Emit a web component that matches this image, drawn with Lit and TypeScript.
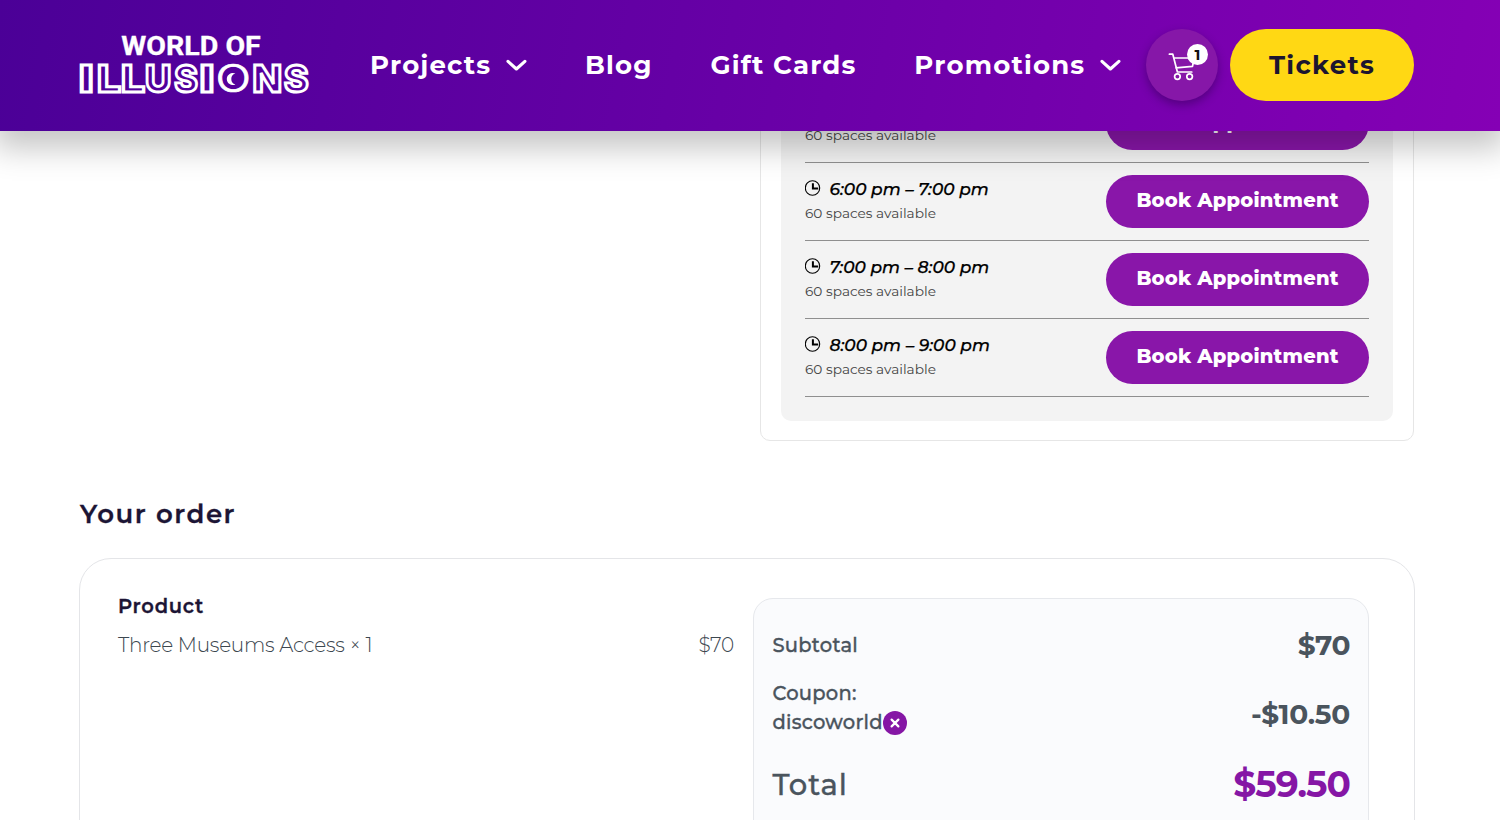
import { LitElement, html, css } from 'lit';
import { customElement, property } from 'lit/decorators.js';

const chevron = html`<svg class="chevron" width="21" height="13" viewBox="0 0 21 13" fill="none" stroke="#fff" stroke-width="3.1" stroke-linecap="round" stroke-linejoin="round"><path d="M2 2.4l8.4 7.6L18.9 2.4"/></svg>`;

/* letter, left edge, advance width */
const LOGO_LETTERS: [string, number, number][] = [
  ['I', 78.8, 14.9], ['L', 97, 24], ['L', 121, 24], ['U', 145, 26.3], ['S', 174.2, 23.5],
  ['I', 199.4, 14.9], ['O', 215.6, 35.5], ['N', 252.6, 29.5], ['S', 284, 24.5],
];

@customElement('site-header')
export class SiteHeader extends LitElement {
  static styles = css`
    :host { display: block; position: relative; z-index: 2; }
    header {
      display: flex; align-items: center; height: 131px; box-sizing: border-box;
      padding: 0 86px 1px 79px;
      background: linear-gradient(100deg, #4b0097 0%, #6500a5 45%, #8500b5 100%);
      box-shadow: 0 11px 30px 6px rgba(0, 0, 0, 0.23);
      color: #fff;
    }
    .logo { display: block; flex: none; margin-right: 61px; overflow: visible; }
    .world { font: 700 26px Roboto, sans-serif; fill: #fff; stroke: #fff; stroke-width: 0.3; }
    .maze { font: 800 37.5px Inter, sans-serif; fill: none; stroke: #fff; stroke-width: 2.9; stroke-linejoin: miter; }
    .ring { font-weight: 300; fill: #fff; stroke-width: 0.7; }
    nav { display: flex; align-items: center; gap: 57.7px; font-size: 26px; font-weight: 700; letter-spacing: 1.2px; line-height: 40px; white-space: nowrap; }
    .item { display: flex; align-items: center; gap: 15px; }
    .cart {
      position: relative; flex: none; display: flex; margin-left: auto;
      width: 72px; height: 72px; border-radius: 50%;
      background: #8617a8; box-shadow: 0 4px 10px rgba(40, 0, 70, 0.45);
    }
    .badge {
      position: absolute; left: 41px; top: 15px; width: 21px; height: 21px; border-radius: 50%;
      background: #fff; color: #111; font-size: 15px; font-weight: 700; line-height: 22px; text-align: center;
    }
    .tickets {
      flex: none; margin-left: 12px; width: 184px; height: 72px; border-radius: 36px; background: #ffd814; color: #1c1530;
      font-size: 26px; font-weight: 700; letter-spacing: 1.3px; line-height: 72px; text-align: center;
    }
  `;
  render() {
    return html`<header>
      <svg class="logo" width="230" height="64" viewBox="79 34 230 64">
        <text class="world" x="121.3" y="56.2" textLength="139.5" lengthAdjust="spacingAndGlyphs">WORLD OF</text>
        ${LOGO_LETTERS.map(([c, x, w]) => html`<svg x=${x} y="60" width=${w} height="38" overflow="visible"><text class="maze ${c === 'O' ? 'ring' : ''}" x="0" y="32.9" textLength=${w} lengthAdjust="spacingAndGlyphs">${c}</text></svg>`)}
        <path d="M235.4 74.6a6 6 0 1 0 0 10.8a5.6 5.6 0 0 1 0-10.8z" fill="#fff"/>
      </svg>
      <nav>
        <span class="item">Projects${chevron}</span>
        <span class="item">Blog</span>
        <span class="item">Gift Cards</span>
        <span class="item">Promotions${chevron}</span>
      </nav>
      <div class="cart">
        <svg width="72" height="72" viewBox="1146 29 72 72" fill="none" stroke="#fff" stroke-width="1.7" stroke-linecap="round" stroke-linejoin="round">
          <path d="M1169.4 54.2h3.4l4.6 17.8h14.4M1173.9 58h20.4l-1.8 8.3-16.6 1.5"/>
          <circle cx="1177.4" cy="76.6" r="2.8"/><circle cx="1189.6" cy="76.6" r="2.8"/>
        </svg>
        <span class="badge">1</span>
      </div>
      <div class="tickets">Tickets</div>
    </header>`;
  }
}

@customElement('time-slot')
export class TimeSlot extends LitElement {
  @property() time = '';
  static styles = css`
    :host { display: flex; justify-content: space-between; align-items: center; height: 78px; box-sizing: border-box; border-bottom: 1px solid #8f8f8f; }
    .info { padding-bottom: 2px; }
    .time { display: flex; align-items: center; gap: 8.5px; font-size: 17px; font-style: italic; font-weight: 500; line-height: 24px; color: #000; -webkit-text-stroke: 0.25px #000; }
    .time svg { margin-top: -2px; }
    .spaces { font-size: 13.7px; line-height: 24px; color: #444; }
    .book {
      width: 263px; height: 53px; border-radius: 27px; background: #8916a9; color: #fff;
      font-size: 19.5px; font-weight: 800; letter-spacing: 0.2px; line-height: 51px; text-align: center;
    }
  `;
  render() {
    return html`<div class="info">
        <div class="time">
          <svg width="16" height="16" viewBox="0 0 16 16" fill="none" stroke="#000"><circle cx="7.5" cy="8" r="7.2" stroke-width="1.1"/><path d="M7.9 3.2V8.6H13.2" stroke-width="2"/></svg>
          <span>${this.time}</span>
        </div>
        <div class="spaces">60 spaces available</div>
      </div>
      <div class="book">Book Appointment</div>`;
  }
}

@customElement('order-summary')
export class OrderSummary extends LitElement {
  static styles = css`
    :host { display: block; }
    h2 { margin: 0; font-size: 26px; font-weight: 600; letter-spacing: 1.55px; line-height: 36px; color: #1c1535; -webkit-text-stroke: 0.3px #1c1535; }
    .card {
      display: flex; justify-content: space-between; box-sizing: border-box; width: 1336px; height: 500px;
      margin: 26px 0 0 -1px; padding: 39px 45px 0 38px; border: 1px solid #e4e5e8; border-radius: 32px;
    }
    .products { width: 616px; }
    .head { margin-top: -4px; font-size: 19.5px; font-weight: 600; letter-spacing: 0.75px; line-height: 24px; color: #1c1535; -webkit-text-stroke: 0.3px #1c1535; }
    .line { display: flex; justify-content: space-between; margin-top: 15px; font-size: 20px; font-weight: 300; letter-spacing: -0.25px; line-height: 25px; color: #3c474f; }
    .totals {
      box-sizing: border-box; width: 616px; padding: 24px 18px 0 18.5px; border: 1px solid #e6e8ec; border-radius: 20px; background: #fafbfd;
      color: #4a545d; font-weight: 500;
    }
    .row { display: flex; justify-content: space-between; align-items: center; font-size: 19.5px; letter-spacing: 0.25px; line-height: 29px; }
    .row > span:first-child { -webkit-text-stroke: 0.35px #4a545d; }
    .sub { height: 45px; }
    .coupon { height: 92px; }
    .label { padding-bottom: 13px; }
    .code { display: flex; align-items: center; }
    .code svg { margin-top: 2px; }
    .total { height: 49px; font-size: 29px; letter-spacing: 0.9px; }
    .amount { font-size: 28px; font-weight: 700; letter-spacing: -0.4px; }
    .discount { letter-spacing: -0.25px; }
    .grand { font-size: 36px; letter-spacing: -0.9px; color: #8516a5; }
  `;
  render() {
    return html`<h2>Your order</h2>
      <div class="card">
        <div class="products">
          <div class="head">Product</div>
          <div class="line"><span>Three Museums Access × 1</span><span>$70</span></div>
        </div>
        <div class="totals">
          <div class="row sub"><span>Subtotal</span><span class="amount">$70</span></div>
          <div class="row coupon">
            <span class="label">Coupon:<span class="code">discoworld<svg width="24" height="24" viewBox="0 0 24 24"><circle cx="12" cy="12" r="12" fill="#8516a5"/><path d="M8.6 8.6l6.8 6.8M15.4 8.6l-6.8 6.8" stroke="#fff" stroke-width="2.2" stroke-linecap="round"/></svg></span></span>
            <span class="amount discount">-$10.50</span>
          </div>
          <div class="row total"><span>Total</span><span class="amount grand">$59.50</span></div>
        </div>
      </div>`;
  }
}

@customElement('app-root')
export class AppRoot extends LitElement {
  static styles = css`
    :host { display: block; height: 820px; overflow: hidden; background: #fff; font-family: Montserrat, Inter, sans-serif; }
    .booking {
      box-sizing: border-box; width: 654px; height: 360px; margin: -50px 0 0 760px; padding: 0 20px 20px;
      border: 1px solid #e6e6e6; border-radius: 10px;
    }
    .slots { box-sizing: border-box; height: 339px; padding: 3px 24px 24px; border-radius: 10px; background: #f3f3f3; }
    order-summary { margin: 55px 0 0 80px; }
  `;
  render() {
    return html`<site-header></site-header>
      <div class="booking"><div class="slots">
        ${['5:00 pm – 6:00 pm', '6:00 pm – 7:00 pm', '7:00 pm – 8:00 pm', '8:00 pm – 9:00 pm'].map((t) => html`<time-slot .time=${t}></time-slot>`)}
      </div></div>
      <order-summary></order-summary>`;
  }
}
